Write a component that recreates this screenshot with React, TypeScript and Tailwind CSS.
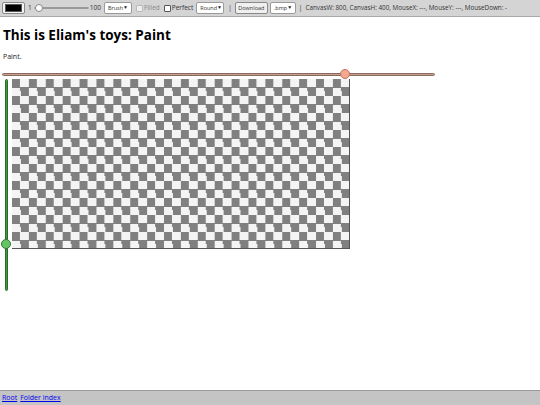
import { useState } from 'react'

const font = { fontFamily: '"Open Sans", "Noto Sans", sans-serif' }

function Select({ label, w, className = '' }: { label: string; w: string; className?: string }) {
  return (
    <div className={`flex h-[12px] shrink-0 ${w} ${className} items-center justify-between rounded-[2px] border border-[#9a9a9a] bg-white px-[3px] text-[5.5px] text-[#333]`}>
      <span>{label}</span>
      <span className="text-[5px] text-[#222]">▼</span>
    </div>
  )
}

export default function App() {
  const [status] = useState({ w: 800, h: 400, x: '---', y: '---', down: '-' })

  return (
    <div className="flex min-h-screen flex-col bg-white text-black" style={font}>
      {/* toolbar */}
      <div className="flex h-[17px] items-center whitespace-nowrap border-b border-[#a8a8a8] bg-[#d4d4d4] text-[6.5px] text-[#333]">
        <div className="ml-[2px] flex h-[12px] w-[23px] shrink-0 items-center justify-center rounded-[2px] border border-[#888] bg-[#f4f4f4]">
          <div className="h-[8px] w-[17px] border border-[#555] bg-black" />
        </div>
        <span className="ml-[3px]">1</span>
        <div className="relative ml-[2px] flex h-[10px] w-[55px] shrink-0 items-center">
          <div className="h-[2px] w-full rounded-full border border-[#999] bg-[#eee]" />
          <div className="absolute left-[1px] top-[1px] h-[8px] w-[8px] rounded-full border border-[#888] bg-white" />
        </div>
        <span className="ml-[1px]">100</span>
        <Select label="Brush" w="w-[28px]" className="ml-[3px]" />
        <div className="ml-[4px] h-[7px] w-[7px] shrink-0 rounded-[1px] border border-[#bbb] bg-[#eee]" />
        <span className="ml-[1px] text-[#888]">Filled</span>
        <div className="ml-[4px] h-[7px] w-[7px] shrink-0 rounded-[1px] border border-[#555] bg-white" />
        <span className="ml-[1px]">Perfect</span>
        <Select label="Round" w="w-[28px]" className="ml-[3px]" />
        <span className="ml-[4px]">|</span>
        <div className="ml-[3px] flex h-[12px] w-[33px] shrink-0 items-center justify-center rounded-[2px] border border-[#888] bg-[#f0f0f0] text-[5.5px]">
          Download
        </div>
        <Select label=".bmp" w="w-[26px]" className="ml-[2px]" />
        <span className="ml-[3px]">|</span>
        <span className="ml-[3px] text-[6.3px]">
          CanvasW: {status.w}, CanvasH: {status.h}, MouseX: {status.x}, MouseY: {status.y}, MouseDown: {status.down}
        </span>
      </div>

      {/* heading */}
      <h1 className="ml-[3px] mt-[10px] text-[13.5px] font-bold leading-[16px]">This is Eliam's toys: Paint</h1>
      <p className="ml-[3px] mt-[9px] text-[7px] leading-[10px] text-[#222]">Paint.</p>

      {/* horizontal slider */}
      <div className="relative ml-[2px] mt-[7px] flex h-[10px] w-[433px] items-center">
        <div className="h-[3px] w-full rounded-full border border-[#8a6a5e] bg-[#c8a090]" />
        <div className="absolute left-[338px] top-0 h-[10px] w-[10px] rounded-full border border-[#c07060] bg-[#f4a890]" />
      </div>

      {/* vertical slider + canvas */}
      <div className="flex items-start">
        <div className="relative ml-[1px] flex h-[212px] w-[10px] justify-center">
          <div className="h-full w-[3px] rounded-full border border-[#2a6a2a] bg-[#3e9a3e]" />
          <div className="absolute left-0 top-[160px] h-[10px] w-[10px] rounded-full border border-[#2f7a2f] bg-[#66c466]" />
        </div>
        <div className="ml-[1px] h-[170px] w-[338px] border-b border-r border-[#555] bg-[conic-gradient(#f4f4f4_25%,#808080_0_50%,#f4f4f4_0_75%,#808080_0)] bg-size-[16.9px_17px]" />
      </div>

      {/* footer */}
      <div className="mt-auto flex h-[15px] items-center gap-[3px] border-t border-[#999] bg-[#c4c4c4] pl-[2px] text-[7px]">
        <a href="#" className="text-[#0000ee] underline">Root</a>
        <a href="#" className="text-[#0000ee] underline">Folder index</a>
      </div>
    </div>
  )
}
